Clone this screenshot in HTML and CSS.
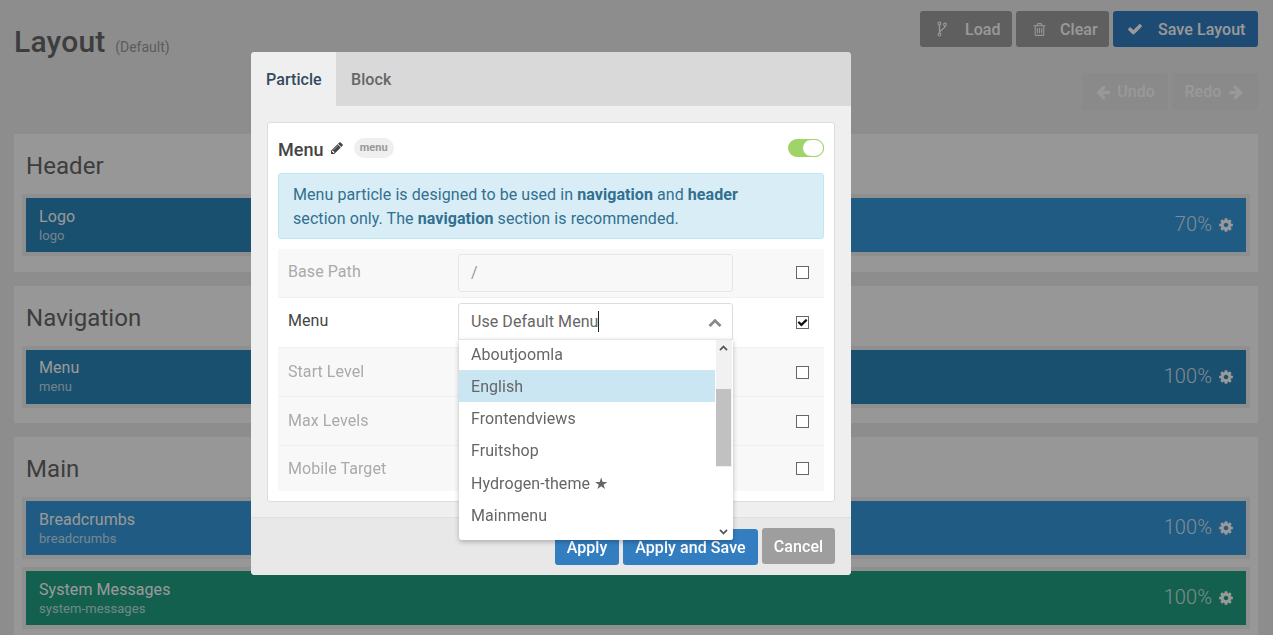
FILE: index.html
```html
<!DOCTYPE html>
<html lang="en">
<head>
  <meta charset="UTF-8">
  <title>Layout</title>
  <link rel="stylesheet" href="styles.css">
</head>
<body>
  <svg class="sprites" xmlns="http://www.w3.org/2000/svg">
    <symbol id="i-cog" viewBox="0 0 1792 1792"><path d="M1152 896q0-106-75-181t-181-75-181 75-75 181 75 181 181 75 181-75 75-181zm512-109v222q0 12-8 23t-20 13l-185 28q-19 54-39 91 35 50 107 138 10 12 10 25t-9 23q-27 37-99 108t-94 71q-12 0-26-9l-138-108q-44 23-91 38-16 136-29 186-7 28-36 28h-222q-14 0-24.5-8.5t-11.5-21.5l-28-184q-49-16-90-37l-141 107q-10 9-25 9-14 0-25-11-126-114-165-168-7-10-7-23 0-12 8-23 15-21 51-66.5t54-70.5q-27-50-41-99l-183-27q-13-2-21-12.5t-8-23.5v-222q0-12 8-23t19-13l186-28q14-46 39-92-40-57-107-138-10-12-10-24 0-10 9-23 26-36 98.5-107.5t94.5-71.5q13 0 26 10l138 107q44-23 91-38 16-136 29-186 7-28 36-28h222q14 0 24.5 8.5t11.5 21.5l28 184q49 16 90 37l142-107q9-9 24-9 13 0 25 10 129 119 165 170 7 8 7 22 0 12-8 23-15 21-51 66.5t-54 70.5q26 50 41 98l183 28q13 2 21 12.5t8 23.5z"/></symbol>
    <symbol id="i-check" viewBox="0 0 1792 1792"><path d="M1671 566q0 40-28 68l-724 724-136 136q-28 28-68 28t-68-28l-136-136-362-362q-28-28-28-68t28-68l136-136q28-28 68-28t68 28l294 295 656-657q28-28 68-28t68 28l136 136q28 28 28 68z"/></symbol>
    <symbol id="i-pencil" viewBox="0 0 1792 1792"><path d="M491 1536l91-91-235-235-91 91v107h128v128h107zm523-928q0-22-22-22-10 0-17 7l-542 542q-7 7-7 17 0 22 22 22 10 0 17-7l542-542q7-7 7-17zm-54-192l416 416-832 832h-416v-416zm683 96q0 53-37 90l-166 165-416-416 165-164q36-38 90-38 53 0 91 38l235 234q37 39 37 91z"/></symbol>
    <symbol id="i-left" viewBox="0 0 1792 1792"><path d="M1664 896v128q0 53-32.5 90.5t-84.5 37.5h-704l293 294q38 36 38 90t-38 90l-75 76q-37 37-90 37-52 0-91-37l-651-652q-37-37-37-90 0-52 37-91l651-650q38-38 91-38 52 0 90 38l75 74q38 38 38 91t-38 91l-293 293h704q52 0 84.5 37.5t32.5 90.5z"/></symbol>
    <symbol id="i-trash" viewBox="0 0 1792 1792"><path d="M704 736v576q0 14-9 23t-23 9h-64q-14 0-23-9t-9-23v-576q0-14 9-23t23-9h64q14 0 23 9t9 23zm256 0v576q0 14-9 23t-23 9h-64q-14 0-23-9t-9-23v-576q0-14 9-23t23-9h64q14 0 23 9t9 23zm256 0v576q0 14-9 23t-23 9h-64q-14 0-23-9t-9-23v-576q0-14 9-23t23-9h64q14 0 23 9t9 23zm128 724v-948h-896v948q0 22 7 40.5t14.5 27 10.5 8.5h832q3 0 10.5-8.5t14.5-27 7-40.5zm-672-1076h448l-48-117q-7-9-17-11h-317q-10 2-17 11zm928 32v64q0 14-9 23t-23 9h-96v948q0 83-47 143.5t-113 60.5h-832q-66 0-113-58.5t-47-141.5v-952h-96q-14 0-23-9t-9-23v-64q0-14 9-23t23-9h309l70-167q15-37 54-63t79-26h320q40 0 79 26t54 63l70 167h309q14 0 23 9t9 23z"/></symbol>
    <symbol id="i-up" viewBox="0 0 1792 1792"><path d="M1683 1331l-166 165q-19 19-45 19t-45-19l-531-531-531 531q-19 19-45 19t-45-19l-166-165q-19-19-19-45.5t19-45.5l742-741q19-19 45-19t45 19l742 741q19 19 19 45.5t-19 45.5z"/></symbol>
    <symbol id="i-fork" viewBox="0 0 10 16"><circle cx="2.5" cy="2.5" r="1.4" fill="none" stroke="currentColor" stroke-width="1.1"/><circle cx="2.5" cy="13.5" r="1.4" fill="none" stroke="currentColor" stroke-width="1.1"/><circle cx="8" cy="3.5" r="1.4" fill="none" stroke="currentColor" stroke-width="1.1"/><path d="M2.5 4v8M8 5c0 3.5-5.500 3.500-5.500 7" fill="none" stroke="currentColor" stroke-width="1.3"/></symbol>
  </svg>

  <div class="page">
    <div class="top-row">
      <h1 class="page-title">Layout <small>(Default)</small></h1>
      <div class="top-actions">
        <div class="btn-line">
          <button class="btn btn-grey btn-load"><svg class="ico ico-fork"><use href="#i-fork"/></svg>Load</button>
          <button class="btn btn-grey btn-clear"><svg class="ico ico-trash"><use href="#i-trash"/></svg>Clear</button>
          <button class="btn btn-blue btn-save"><svg class="ico"><use href="#i-check"/></svg>Save Layout</button>
        </div>
        <div class="btn-line">
          <button class="btn btn-off"><svg class="ico-sm"><use href="#i-left"/></svg>Undo</button>
          <button class="btn btn-off">Redo<svg class="ico-sm flip"><use href="#i-left"/></svg></button>
        </div>
      </div>
    </div>

    <section class="section">
      <h2>Header</h2>
      <div class="wrap">
        <div class="block blue-dark half"><div class="name">Logo</div><div class="sub">logo</div></div>
        <div class="block blue grow"><div></div><div class="size">70% <svg class="cog"><use href="#i-cog"/></svg></div></div>
      </div>
    </section>

    <section class="section">
      <h2>Navigation</h2>
      <div class="wrap">
        <div class="block blue-dark grow"><div><div class="name">Menu</div><div class="sub">menu</div></div><div class="size">100% <svg class="cog"><use href="#i-cog"/></svg></div></div>
      </div>
    </section>

    <section class="section">
      <h2>Main</h2>
      <div class="wrap">
        <div class="block blue grow"><div><div class="name">Breadcrumbs</div><div class="sub">breadcrumbs</div></div><div class="size">100% <svg class="cog"><use href="#i-cog"/></svg></div></div>
      </div>
      <div class="wrap">
        <div class="block green grow"><div><div class="name">System Messages</div><div class="sub">system-messages</div></div><div class="size">100% <svg class="cog"><use href="#i-cog"/></svg></div></div>
      </div>
    </section>
  </div>

  <div class="overlay"></div>

  <div class="modal">
    <div class="tabs">
      <div class="tab active">Particle</div>
      <div class="tab">Block</div>
    </div>
    <div class="modal-body">
      <div class="card">
        <div class="card-head">
          <span class="card-title">Menu</span>
          <svg class="pencil"><use href="#i-pencil"/></svg>
          <span class="badge">menu</span>
          <span class="toggle"><span class="knob"></span></span>
        </div>
        <div class="alert">
          Menu particle is designed to be used in <b>navigation</b> and <b>header</b><br>
          section only. The <b>navigation</b> section is recommended.
        </div>
        <div class="row off row-base">
          <label>Base Path</label>
          <div class="input">/</div>
          <span class="check"></span>
        </div>
        <div class="row row-menu">
          <label>Menu</label>
          <div class="select">
            <span>Use Default Menu<i class="caret"></i></span>
            <svg class="select-arrow"><use href="#i-up"/></svg>
            <div class="dropdown">
              <ul class="options">
                <li>Aboutjoomla</li>
                <li class="current">English</li>
                <li>Frontendviews</li>
                <li>Fruitshop</li>
                <li>Hydrogen-theme ★</li>
                <li>Mainmenu</li>
              </ul>
              <div class="scrollbar">
                <svg class="sb-arrow"><use href="#i-up"/></svg>
                <div class="thumb"></div>
                <svg class="sb-arrow flip-v"><use href="#i-up"/></svg>
              </div>
            </div>
          </div>
          <span class="check on"><svg><use href="#i-check"/></svg></span>
        </div>
        <div class="row off"><label>Start Level</label><div class="spacer"></div><span class="check"></span></div>
        <div class="row off"><label>Max Levels</label><div class="spacer"></div><span class="check"></span></div>
        <div class="row off row-last"><label>Mobile Target</label><div class="spacer"></div><span class="check"></span></div>
      </div>
    </div>
    <div class="modal-foot">
      <button class="btn btn-apply">Apply</button>
      <button class="btn btn-apply btn-apply-save">Apply and Save</button>
      <button class="btn btn-cancel">Cancel</button>
    </div>
  </div>
</body>
</html>
```

FILE: styles.css
```css
* { box-sizing: border-box; }
html, body { height: 100%; }
body { margin: 0; overflow: hidden; background: #ececec; color: #666; font-family: Roboto, "Liberation Sans", sans-serif; letter-spacing: .07px; }
.sprites { display: none; }
button { font-family: inherit; letter-spacing: inherit; }

/* background page */
.page { padding: 0 15px 0 14px; }
.top-row { display: flex; justify-content: space-between; height: 134px; }
.page-title { margin: 22px 0 0; font-size: 30px; line-height: 40px; font-weight: 500; color: #666; letter-spacing: .2px; }
.page-title small { font-size: 14px; font-weight: 400; color: #999; margin-left: 2px; letter-spacing: 0; }
.top-actions { padding-top: 11px; }
.btn-line { display: flex; justify-content: flex-end; gap: 4px; margin-bottom: 26px; }
.btn { border: 0; border-radius: 3px; height: 36px; font-size: 16px; font-weight: 500; color: #fff; padding: 0; display: flex; align-items: center; justify-content: center; }
.btn-grey { background: #9e9e9e; }
.btn-blue { background: #337ec0; }
.btn-load { width: 92px; justify-content: flex-start; padding-left: 17px; }
.btn-clear { width: 93px; justify-content: flex-start; padding-left: 16px; }
.btn-save { width: 145px; justify-content: flex-start; padding-left: 14px; }
.ico { width: 16px; height: 16px; fill: #fff; color: #fff; margin-right: 15px; }
.ico-fork { width: 10px; height: 16px; margin-right: 18px; }
.ico-trash { width: 15px; height: 15px; margin-right: 13px; }
.btn-off { width: 86px; height: 37px; background: #e6e6e6; color: #fff; font-size: 16px; gap: 6px; }
.ico-sm { width: 16px; height: 16px; fill: #fff; }
.flip { transform: scaleX(-1); margin-right: 2px; }

.section { background: #fcfcfc; height: 137.5px; margin-bottom: 14px; padding: 0 8px; }
.section:last-child { height: 220px; margin-bottom: 0; }
.section h2 { margin: 0; height: 60px; padding: 17px 4px 0; font-size: 24px; line-height: 30px; font-weight: 400; color: #666; }
.wrap { background: #eee; padding: 4px; display: flex; margin-bottom: 8px; }
.block { height: 54px; padding: 0 13px; color: #fff; display: flex; justify-content: space-between; align-items: center; }
.half { width: 300px; display: block; padding-top: 9px; }
.grow { flex: 1; }
.blue { background: #3598d9; }
.blue-dark { background: #2a85b9; }
.green { background: #21a084; }
.name { font-size: 16px; line-height: 19px; }
.sub { font-size: 13px; line-height: 16px; margin-top: 2px; opacity: .7; }
.size { font-size: 20px; font-weight: 300; display: flex; align-items: center; gap: 6px; padding-bottom: 2px; color: rgba(255, 255, 255, .8); }
.cog { width: 16px; height: 16px; fill: #fff; margin-right: -1px; margin-top: 2px; }

.overlay { position: fixed; inset: 0; background: rgba(0, 0, 0, .4); }

/* modal window */
.modal { position: absolute; left: 251px; top: 52px; width: 600px; height: 523px; background: #efefef; border-radius: 4px; display: flex; flex-direction: column; }
.tabs { display: flex; height: 54px; background: #d9d9d9; border-radius: 4px 4px 0 0; }
.tab { padding: 0 15px; line-height: 56px; font-size: 16px; font-weight: 500; color: #666; }
.tab.active { background: #efefef; width: 85px; color: #34495e; border-radius: 4px 0 0 0; }
.modal-body { padding: 16px 16px 0; height: 412px; border-bottom: 1px solid #e0e0e0; }
.card { background: #fff; border: 1px solid #ddd; border-radius: 3px; height: 380px; padding: 0 10px; }
.card-head { display: flex; align-items: center; height: 50px; }
.card-title { font-size: 18px; font-weight: 500; color: #444; padding-top: 2px; }
.pencil { width: 14px; height: 14px; fill: #444; margin: 0 0 0 6px; }
.badge { margin-left: 10px; width: 40px; height: 20px; border-radius: 10px; background: #efefef; font-size: 11px; line-height: 20px; font-weight: 700; color: #999; text-align: center; }
.toggle { margin-left: auto; width: 36px; height: 18px; border-radius: 9px; background: #a0d468; position: relative; }
.knob { position: absolute; right: 0; top: 0; width: 22px; height: 18px; border-radius: 9px; background: #fff; border: 1px solid #a0d468; }
.alert { background: #d9edf7; border: 1px solid #bce8f1; border-radius: 3px; color: #31708f; font-size: 16px; line-height: 24px; padding: 9px 14px; height: 66px; margin-bottom: 10px; }
.alert b { font-weight: 700; }

.row { display: flex; align-items: center; padding-left: 10px; height: 49px; border-bottom: 1px solid #f0f0f0; }
.row label { width: 170px; font-size: 16px; color: #444; padding-bottom: 2px; }
.row.off { background: #f8f8f8; }
.row.off label { color: #aaa; }
.row-base { padding-bottom: 1px; }
.row-base label { padding-bottom: 3px; }
.row-last { height: 45px; border-bottom: 0; }
.row.row-last label { padding-bottom: 0; }
.row-menu { height: 50px; align-items: flex-start; padding-top: 5px; }
.row-menu label { line-height: 36px; padding-bottom: 0; }
.row .check { margin-left: 63px; }
.row-menu .check { margin-top: 13px; }
.spacer { width: 275px; }
.input { width: 275px; height: 38px; padding: 0 12px; line-height: 36px; background: #f8f8f8; border: 1px solid #e6e6e6; border-radius: 3px; font-size: 16px; color: #999; }
.check { width: 13px; height: 13px; border: 1px solid #666; background: #fff; flex: none; display: flex; }
.check svg { width: 11px; height: 11px; fill: #111; }

/* open select with its list */
.select { position: relative; width: 275px; height: 37px; padding: 0 12px; line-height: 35px; background: #fff; border: 1px solid #ddd; border-radius: 3px 3px 0 0; font-size: 16px; color: #666; z-index: 2; }
.caret { display: inline-block; width: 1px; height: 21px; background: #222; vertical-align: -5px; }
.select-arrow { position: absolute; right: 10px; top: 11px; width: 14px; height: 14px; fill: #888; }
.dropdown { position: absolute; left: 0; top: 35px; width: 274px; height: 201px; background: #fff; display: flex; overflow: hidden; box-shadow: 0 2px 5px rgba(0, 0, 0, .25); border-top: 1px solid #e6e6e6; border-radius: 0 0 3px 3px; }
.options { flex: 1; margin: -2.2px 0 0; padding: 0; list-style: none; }
.options li { height: 32.2px; line-height: 32px; padding: 1px 12px 0; font-size: 16px; color: #666; }
.options .current { background: #c9e6f2; margin-right: 1px; }
.scrollbar { width: 17px; background: #fff; position: relative; }
.scrollbar::before { content: ""; position: absolute; left: 0; right: 1px; top: 0; height: 127px; background: #f1f1f1; }
.sb-arrow { position: absolute; left: 3px; top: 3px; width: 9px; height: 9px; fill: #555; }
.flip-v { top: auto; bottom: 3px; transform: scaleY(-1); }
.thumb { position: absolute; left: 0; right: 2px; top: 49px; height: 77px; background: #c1c1c1; }

.modal-foot { flex: 1; background: #e8e8e8; border-radius: 0 0 4px 4px; display: flex; justify-content: flex-end; gap: 4px; padding: 10px 16px 0; }
.btn-apply { width: 64px; height: 36px; margin-top: 1px; background: #337ec0; }
.btn-apply-save { width: 135px; }
.btn-cancel { width: 73px; height: 36px; background: #9e9e9e; }
```
